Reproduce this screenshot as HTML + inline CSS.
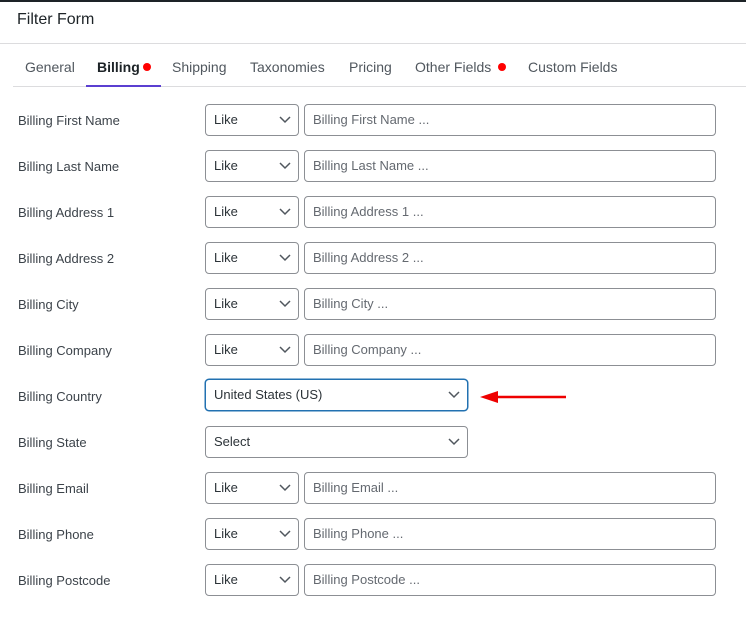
<!DOCTYPE html>
<html><head><style>
*{box-sizing:border-box;margin:0;padding:0}
body{width:746px;height:629px;background:#fff;font-family:"Liberation Sans",sans-serif;position:relative;overflow:hidden;color:#3c434a}
.topbar{position:absolute;left:0;top:0;width:746px;height:2px;background:#1d2327}
.title{position:absolute;left:17px;top:11px;font-size:16px;color:#1d2327}
.hl{position:absolute;left:0;top:43px;width:746px;height:1px;background:#dcdcde}
.tl{position:absolute;left:13px;top:86px;width:733px;height:1px;background:#dcdcde}
.tab{position:absolute;top:59px;font-size:14px;color:#50575e}
.tab.act{color:#1d2327;font-weight:bold}
.dot{position:absolute;width:8px;height:8px;border-radius:50%;background:#f00}
.ul{position:absolute;left:86px;top:85px;width:75px;height:2px;background:#5b3fd1}
.lbl{position:absolute;left:18px;font-size:13px;color:#3c434a}
.sel,.inp{position:absolute;height:32px;border:1px solid #8c8f94;border-radius:4px;font-size:13px;padding:0 8px;line-height:30px;background:#fff}
.sel{color:#2c3338}
.inp{color:#646970}
.sel svg{position:absolute;right:7px;top:11px}
</style></head><body>
<div class="topbar"></div>
<div class="title">Filter Form</div>
<div class="hl"></div>
<div class="tab" style="left:25px">General</div>
<div class="tab act" style="left:97px">Billing</div><div class="dot" style="left:143px;top:63px"></div>
<div class="tab" style="left:172px">Shipping</div>
<div class="tab" style="left:250px">Taxonomies</div>
<div class="tab" style="left:349px">Pricing</div>
<div class="tab" style="left:415px">Other Fields</div><div class="dot" style="left:498px;top:63px"></div>
<div class="tab" style="left:528px">Custom Fields</div>
<div class="tl"></div><div class="ul"></div>

<div class="lbl" style="top:113px">Billing First Name</div>
<div class="sel" style="left:205px;top:104px;width:94px">Like<svg width="12" height="8"><path d="M1 1l5 5 5-5" fill="none" stroke="#50575e" stroke-width="1.5"/></svg></div>
<div class="inp" style="left:304px;top:104px;width:412px">Billing First Name ...</div>

<div class="lbl" style="top:159px">Billing Last Name</div>
<div class="sel" style="left:205px;top:150px;width:94px">Like<svg width="12" height="8"><path d="M1 1l5 5 5-5" fill="none" stroke="#50575e" stroke-width="1.5"/></svg></div>
<div class="inp" style="left:304px;top:150px;width:412px">Billing Last Name ...</div>

<div class="lbl" style="top:205px">Billing Address 1</div>
<div class="sel" style="left:205px;top:196px;width:94px">Like<svg width="12" height="8"><path d="M1 1l5 5 5-5" fill="none" stroke="#50575e" stroke-width="1.5"/></svg></div>
<div class="inp" style="left:304px;top:196px;width:412px">Billing Address 1 ...</div>

<div class="lbl" style="top:251px">Billing Address 2</div>
<div class="sel" style="left:205px;top:242px;width:94px">Like<svg width="12" height="8"><path d="M1 1l5 5 5-5" fill="none" stroke="#50575e" stroke-width="1.5"/></svg></div>
<div class="inp" style="left:304px;top:242px;width:412px">Billing Address 2 ...</div>

<div class="lbl" style="top:297px">Billing City</div>
<div class="sel" style="left:205px;top:288px;width:94px">Like<svg width="12" height="8"><path d="M1 1l5 5 5-5" fill="none" stroke="#50575e" stroke-width="1.5"/></svg></div>
<div class="inp" style="left:304px;top:288px;width:412px">Billing City ...</div>

<div class="lbl" style="top:343px">Billing Company</div>
<div class="sel" style="left:205px;top:334px;width:94px">Like<svg width="12" height="8"><path d="M1 1l5 5 5-5" fill="none" stroke="#50575e" stroke-width="1.5"/></svg></div>
<div class="inp" style="left:304px;top:334px;width:412px">Billing Company ...</div>

<div class="lbl" style="top:389px">Billing Country</div>
<div class="sel" style="left:205px;top:379px;width:263px;border:1.5px solid #2271b1;box-shadow:0 0 0 0.5px #2271b1">United States (US)<svg width="12" height="8"><path d="M1 1l5 5 5-5" fill="none" stroke="#50575e" stroke-width="1.5"/></svg></div>
<svg style="position:absolute;left:478px;top:390px" width="92" height="14"><path d="M12 7H88" stroke="#e00" stroke-width="2.5"/><path d="M2 7L20 1V13Z" fill="#e00"/></svg>

<div class="lbl" style="top:435px">Billing State</div>
<div class="sel" style="left:205px;top:426px;width:263px">Select<svg width="12" height="8"><path d="M1 1l5 5 5-5" fill="none" stroke="#50575e" stroke-width="1.5"/></svg></div>

<div class="lbl" style="top:481px">Billing Email</div>
<div class="sel" style="left:205px;top:472px;width:94px">Like<svg width="12" height="8"><path d="M1 1l5 5 5-5" fill="none" stroke="#50575e" stroke-width="1.5"/></svg></div>
<div class="inp" style="left:304px;top:472px;width:412px">Billing Email ...</div>

<div class="lbl" style="top:527px">Billing Phone</div>
<div class="sel" style="left:205px;top:518px;width:94px">Like<svg width="12" height="8"><path d="M1 1l5 5 5-5" fill="none" stroke="#50575e" stroke-width="1.5"/></svg></div>
<div class="inp" style="left:304px;top:518px;width:412px">Billing Phone ...</div>

<div class="lbl" style="top:573px">Billing Postcode</div>
<div class="sel" style="left:205px;top:564px;width:94px">Like<svg width="12" height="8"><path d="M1 1l5 5 5-5" fill="none" stroke="#50575e" stroke-width="1.5"/></svg></div>
<div class="inp" style="left:304px;top:564px;width:412px">Billing Postcode ...</div>
</body></html>
